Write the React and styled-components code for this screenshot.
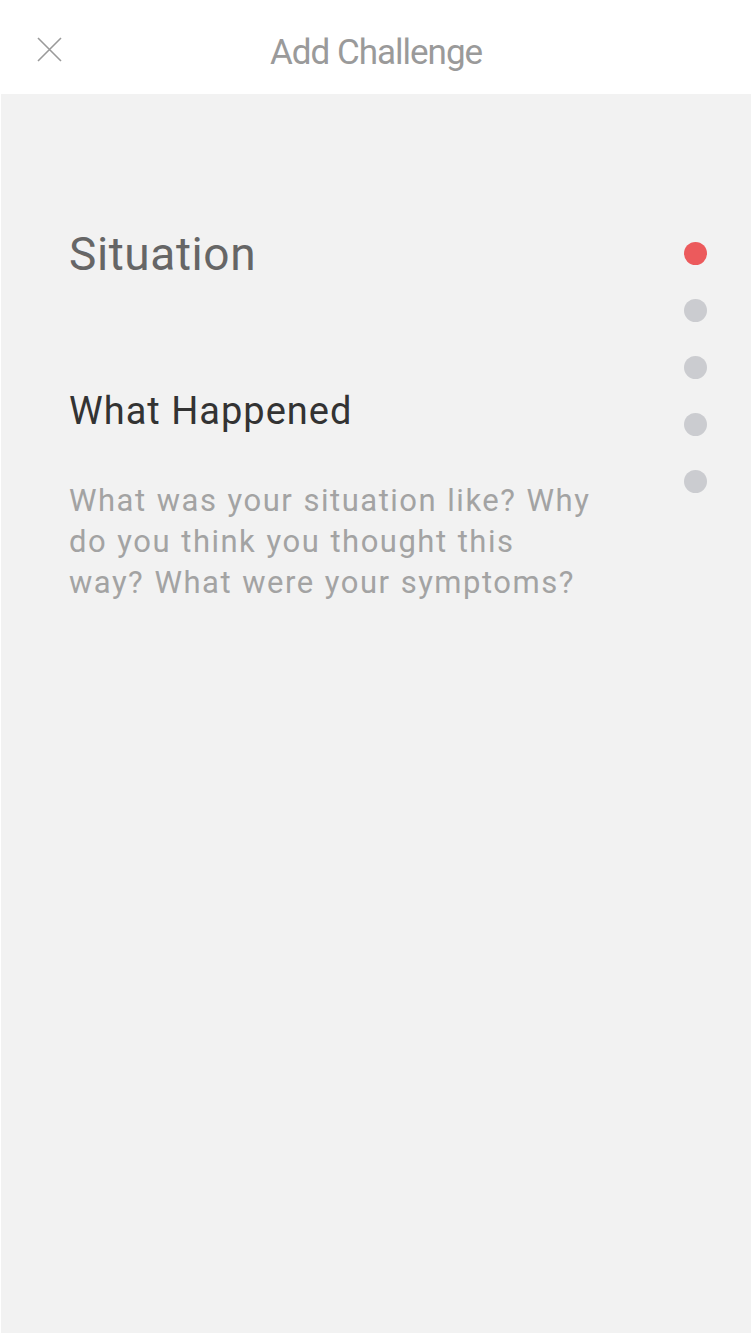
import React from 'react';
import styled, { createGlobalStyle } from 'styled-components';

const GlobalStyle = createGlobalStyle`
  html, body {
    margin: 0;
    padding: 0;
    background: #fff;
  }
  body {
    font-family: Roboto, "Liberation Sans", sans-serif;
  }
`

const Screen = styled.div`
  width: 752px;
  height: 1334px;
  box-sizing: border-box;
  border: 1px solid #fff;
  border-top: 0;
  display: flex;
  flex-direction: column;
  background: #f2f2f2;
`

const Header = styled.header`
  height: 94px;
  flex-shrink: 0;
  background: #fff;
  display: flex;
  align-items: flex-start;
  justify-content: center;
  position: relative;
`

const CloseButton = styled.button`
  position: absolute;
  left: 35px;
  top: 36px;
  width: 27px;
  height: 27px;
  padding: 0;
  border: 0;
  background: none;
  display: flex;
`

const Title = styled.h1`
  margin: 33px 0 0;
  font-size: 35px;
  line-height: 40px;
  font-weight: 400;
  letter-spacing: -1px;
  color: #9a9a9a;
`

const Body = styled.main`
  flex: 1;
  display: flex;
  justify-content: space-between;
  padding: 137px 44px 0 68px;
`

const TextColumn = styled.section`
  width: 530px;
  display: flex;
  flex-direction: column;
`

const StepTitle = styled.h2`
  margin: 0;
  font-size: 46px;
  line-height: 46px;
  font-weight: 400;
  letter-spacing: 0.6px;
  color: #666;
`

const Question = styled.h3`
  margin: 115px 0 0;
  font-size: 38px;
  line-height: 38px;
  font-weight: 400;
  letter-spacing: 1px;
  color: #333;
  white-space: nowrap;
`

const Hint = styled.p`
  margin: 50px 0 0;
  font-size: 31px;
  line-height: 41px;
  letter-spacing: 1.5px;
  word-spacing: 1px;
  color: #a3a3a3;
  white-space: nowrap;
`

const Dots = styled.nav`
  margin-top: 11px;
  display: flex;
  flex-direction: column;
  gap: 34px;
`

const Dot = styled.span`
  width: 23px;
  height: 23px;
  border-radius: 50%;
  background: ${p => (p.$active ? '#ec5a5c' : '#cbccd0')};
`

const steps = [0, 1, 2, 3, 4];

const hintLines = [
  'What was your situation like? Why',
  'do you think you thought this',
  'way? What were your symptoms?',
];

const App = () => {
  return (
    <>
      <GlobalStyle />
      <Screen>
        <Header>
          <CloseButton aria-label="Close">
            <svg width="27" height="27" viewBox="0 0 27 27">
              <path d="M2 2 L25 25 M25 2 L2 25" stroke="#9a9a9a" strokeWidth="1.6" fill="none" />
            </svg>
          </CloseButton>
          <Title>Add Challenge</Title>
        </Header>
        <Body>
          <TextColumn>
            <StepTitle>Situation</StepTitle>
            <Question>What Happened</Question>
            <Hint>
              {hintLines.map((line, i) => (
                <React.Fragment key={i}>
                  {line}
                  {i < hintLines.length - 1 && <br />}
                </React.Fragment>
              ))}
            </Hint>
          </TextColumn>
          <Dots>
            {steps.map(i => (
              <Dot key={i} $active={i === 0} />
            ))}
          </Dots>
        </Body>
      </Screen>
    </>
  );
}

export default App;
